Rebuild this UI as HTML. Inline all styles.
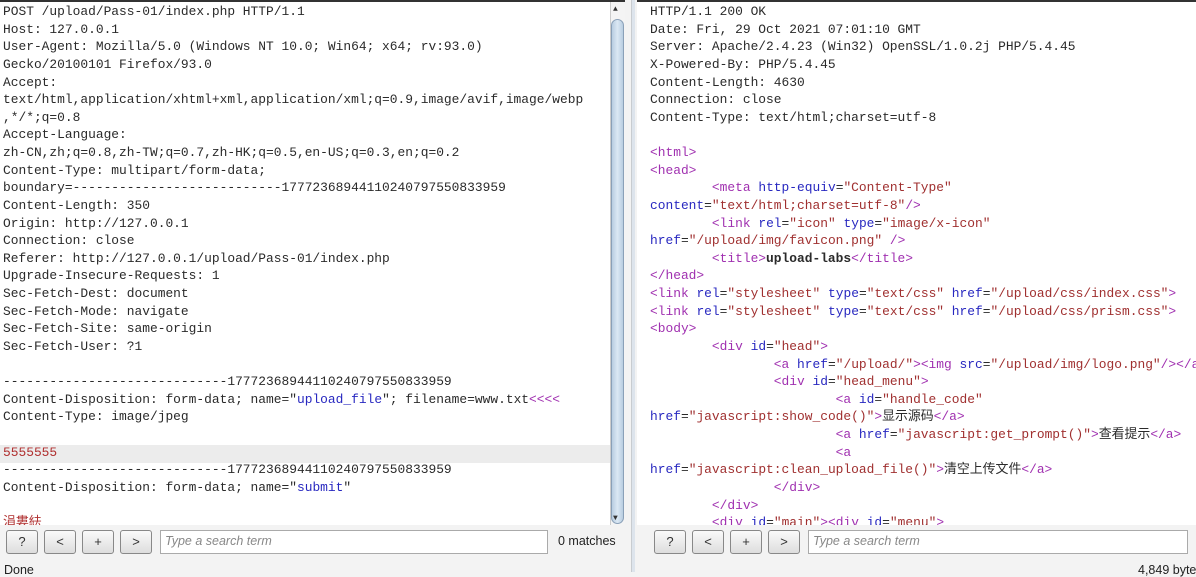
<!DOCTYPE html>
<html><head><meta charset="utf-8"><style>
*{margin:0;padding:0;box-sizing:border-box}
body{width:1196px;height:572px;overflow:hidden;background:#f3f3f3;position:relative;font-family:"Liberation Mono","Noto Sans CJK SC",monospace}
.pane{position:absolute;top:0;height:525px;background:#fff;border-top:2px solid #333;overflow:hidden}
.txt{position:absolute;top:1px;left:3px;font-size:12.9px;line-height:17.63px;color:#2a2a2a;white-space:pre}
.t{color:#a030b0}.a{color:#2828c0}.v{color:#a03030}.r{color:#b03030}.b{font-weight:bold}
.hl{position:absolute;left:0;right:0;top:443px;height:18px;background:#ececec}
.sb{position:absolute;left:610px;top:0;width:15px;height:525px;background:#f4f4f4;border-left:1px solid #ccc}
.thumb{position:absolute;left:611px;top:17px;width:13px;height:505px;background:linear-gradient(90deg,#b8cde0,#dbe8f4 50%,#b8cde0);border:1px solid #8aa0b8;border-radius:7px}
.btn{position:absolute;top:530px;width:32px;height:24px;border:1px solid #888;border-radius:3px;background:linear-gradient(#fafafa,#ddd);font:13px "Liberation Sans",sans-serif;text-align:center;line-height:22px;color:#333}
.srch{position:absolute;top:530px;height:24px;border:1px solid #aaa;background:#fff;font:italic 12.5px "Liberation Sans",sans-serif;color:#888;padding:3px 4px}
.st{position:absolute;top:563px;font:12.5px 'Liberation Sans',sans-serif;color:#222;white-space:nowrap}
</style></head><body>
<div class="pane" style="left:0;width:625px">
<div class="hl"></div>
<div class="txt">POST /upload/Pass-01/index.php HTTP/1.1
Host: 127.0.0.1
User-Agent: Mozilla/5.0 (Windows NT 10.0; Win64; x64; rv:93.0)
Gecko/20100101 Firefox/93.0
Accept:
text/html,application/xhtml+xml,application/xml;q=0.9,image/avif,image/webp
,*/*;q=0.8
Accept-Language:
zh-CN,zh;q=0.8,zh-TW;q=0.7,zh-HK;q=0.5,en-US;q=0.3,en;q=0.2
Content-Type: multipart/form-data;
boundary=---------------------------17772368944110240797550833959
Content-Length: 350
Origin: http://127.0.0.1
Connection: close
Referer: http://127.0.0.1/upload/Pass-01/index.php
Upgrade-Insecure-Requests: 1
Sec-Fetch-Dest: document
Sec-Fetch-Mode: navigate
Sec-Fetch-Site: same-origin
Sec-Fetch-User: ?1

-----------------------------17772368944110240797550833959
Content-Disposition: form-data; name="<span class="a">upload_file</span>"; filename=www.txt<span class="t">&lt;&lt;&lt;&lt;</span>
Content-Type: image/jpeg

<span class="r">5555555</span>
-----------------------------17772368944110240797550833959
Content-Disposition: form-data; name="<span class="a">submit</span>"

<span class="r">涓婁紶</span></div>
<div class="sb"></div><div class="thumb"></div>
<div style="position:absolute;left:613px;top:3px;font-size:8px;color:#333">▲</div>
<div style="position:absolute;left:613px;top:512px;font-size:8px;color:#333">▼</div>
</div>
<div style="position:absolute;left:631px;top:0;width:4px;height:572px;background:#dde4ec;border-left:1px solid #c8ccd0"></div>
<div class="pane" style="left:637px;width:559px">
<div class="txt" style="left:13px">HTTP/1.1 200 OK
Date: Fri, 29 Oct 2021 07:01:10 GMT
Server: Apache/2.4.23 (Win32) OpenSSL/1.0.2j PHP/5.4.45
X-Powered-By: PHP/5.4.45
Content-Length: 4630
Connection: close
Content-Type: text/html;charset=utf-8

<span class="t">&lt;html&gt;</span>
<span class="t">&lt;head&gt;</span>
        <span class="t">&lt;meta</span> <span class="a">http-equiv</span>=<span class="v">"Content-Type"</span>
<span class="a">content</span>=<span class="v">"text/html;charset=utf-8"</span><span class="t">/&gt;</span>
        <span class="t">&lt;link</span> <span class="a">rel</span>=<span class="v">"icon"</span> <span class="a">type</span>=<span class="v">"image/x-icon"</span>
<span class="a">href</span>=<span class="v">"/upload/img/favicon.png"</span> <span class="t">/&gt;</span>
        <span class="t">&lt;title&gt;</span><span class="b">upload-labs</span><span class="t">&lt;/title&gt;</span>
<span class="t">&lt;/head&gt;</span>
<span class="t">&lt;link</span> <span class="a">rel</span>=<span class="v">"stylesheet"</span> <span class="a">type</span>=<span class="v">"text/css"</span> <span class="a">href</span>=<span class="v">"/upload/css/index.css"</span><span class="t">&gt;</span>
<span class="t">&lt;link</span> <span class="a">rel</span>=<span class="v">"stylesheet"</span> <span class="a">type</span>=<span class="v">"text/css"</span> <span class="a">href</span>=<span class="v">"/upload/css/prism.css"</span><span class="t">&gt;</span>
<span class="t">&lt;body&gt;</span>
        <span class="t">&lt;div</span> <span class="a">id</span>=<span class="v">"head"</span><span class="t">&gt;</span>
                <span class="t">&lt;a</span> <span class="a">href</span>=<span class="v">"/upload/"</span><span class="t">&gt;&lt;img</span> <span class="a">src</span>=<span class="v">"/upload/img/logo.png"</span><span class="t">/&gt;&lt;/a&gt;</span>
                <span class="t">&lt;div</span> <span class="a">id</span>=<span class="v">"head_menu"</span><span class="t">&gt;</span>
                        <span class="t">&lt;a</span> <span class="a">id</span>=<span class="v">"handle_code"</span>
<span class="a">href</span>=<span class="v">"javascript:show_code()"</span><span class="t">&gt;</span>显示源码<span class="t">&lt;/a&gt;</span>
                        <span class="t">&lt;a</span> <span class="a">href</span>=<span class="v">"javascript:get_prompt()"</span><span class="t">&gt;</span>查看提示<span class="t">&lt;/a&gt;</span>
                        <span class="t">&lt;a</span>
<span class="a">href</span>=<span class="v">"javascript:clean_upload_file()"</span><span class="t">&gt;</span>清空上传文件<span class="t">&lt;/a&gt;</span>
                <span class="t">&lt;/div&gt;</span>
        <span class="t">&lt;/div&gt;</span>
        <span class="t">&lt;div</span> <span class="a">id</span>=<span class="v">"main"</span><span class="t">&gt;&lt;div</span> <span class="a">id</span>=<span class="v">"menu"</span><span class="t">&gt;</span></div>
</div>
<div class="btn" style="left:6px">?</div>
<div class="btn" style="left:44px">&lt;</div>
<div class="btn" style="left:82px">+</div>
<div class="btn" style="left:120px">&gt;</div>
<div class="srch" style="left:160px;width:388px">Type a search term</div>
<div class="st" style="left:558px;top:534px">0 matches</div>
<div class="btn" style="left:654px">?</div>
<div class="btn" style="left:692px">&lt;</div>
<div class="btn" style="left:730px">+</div>
<div class="btn" style="left:768px">&gt;</div>
<div class="srch" style="left:808px;width:380px">Type a search term</div>
<div class="st" style="left:4px">Done</div>
<div class="st" style="left:1138px">4,849 bytes</div>
</body></html>
